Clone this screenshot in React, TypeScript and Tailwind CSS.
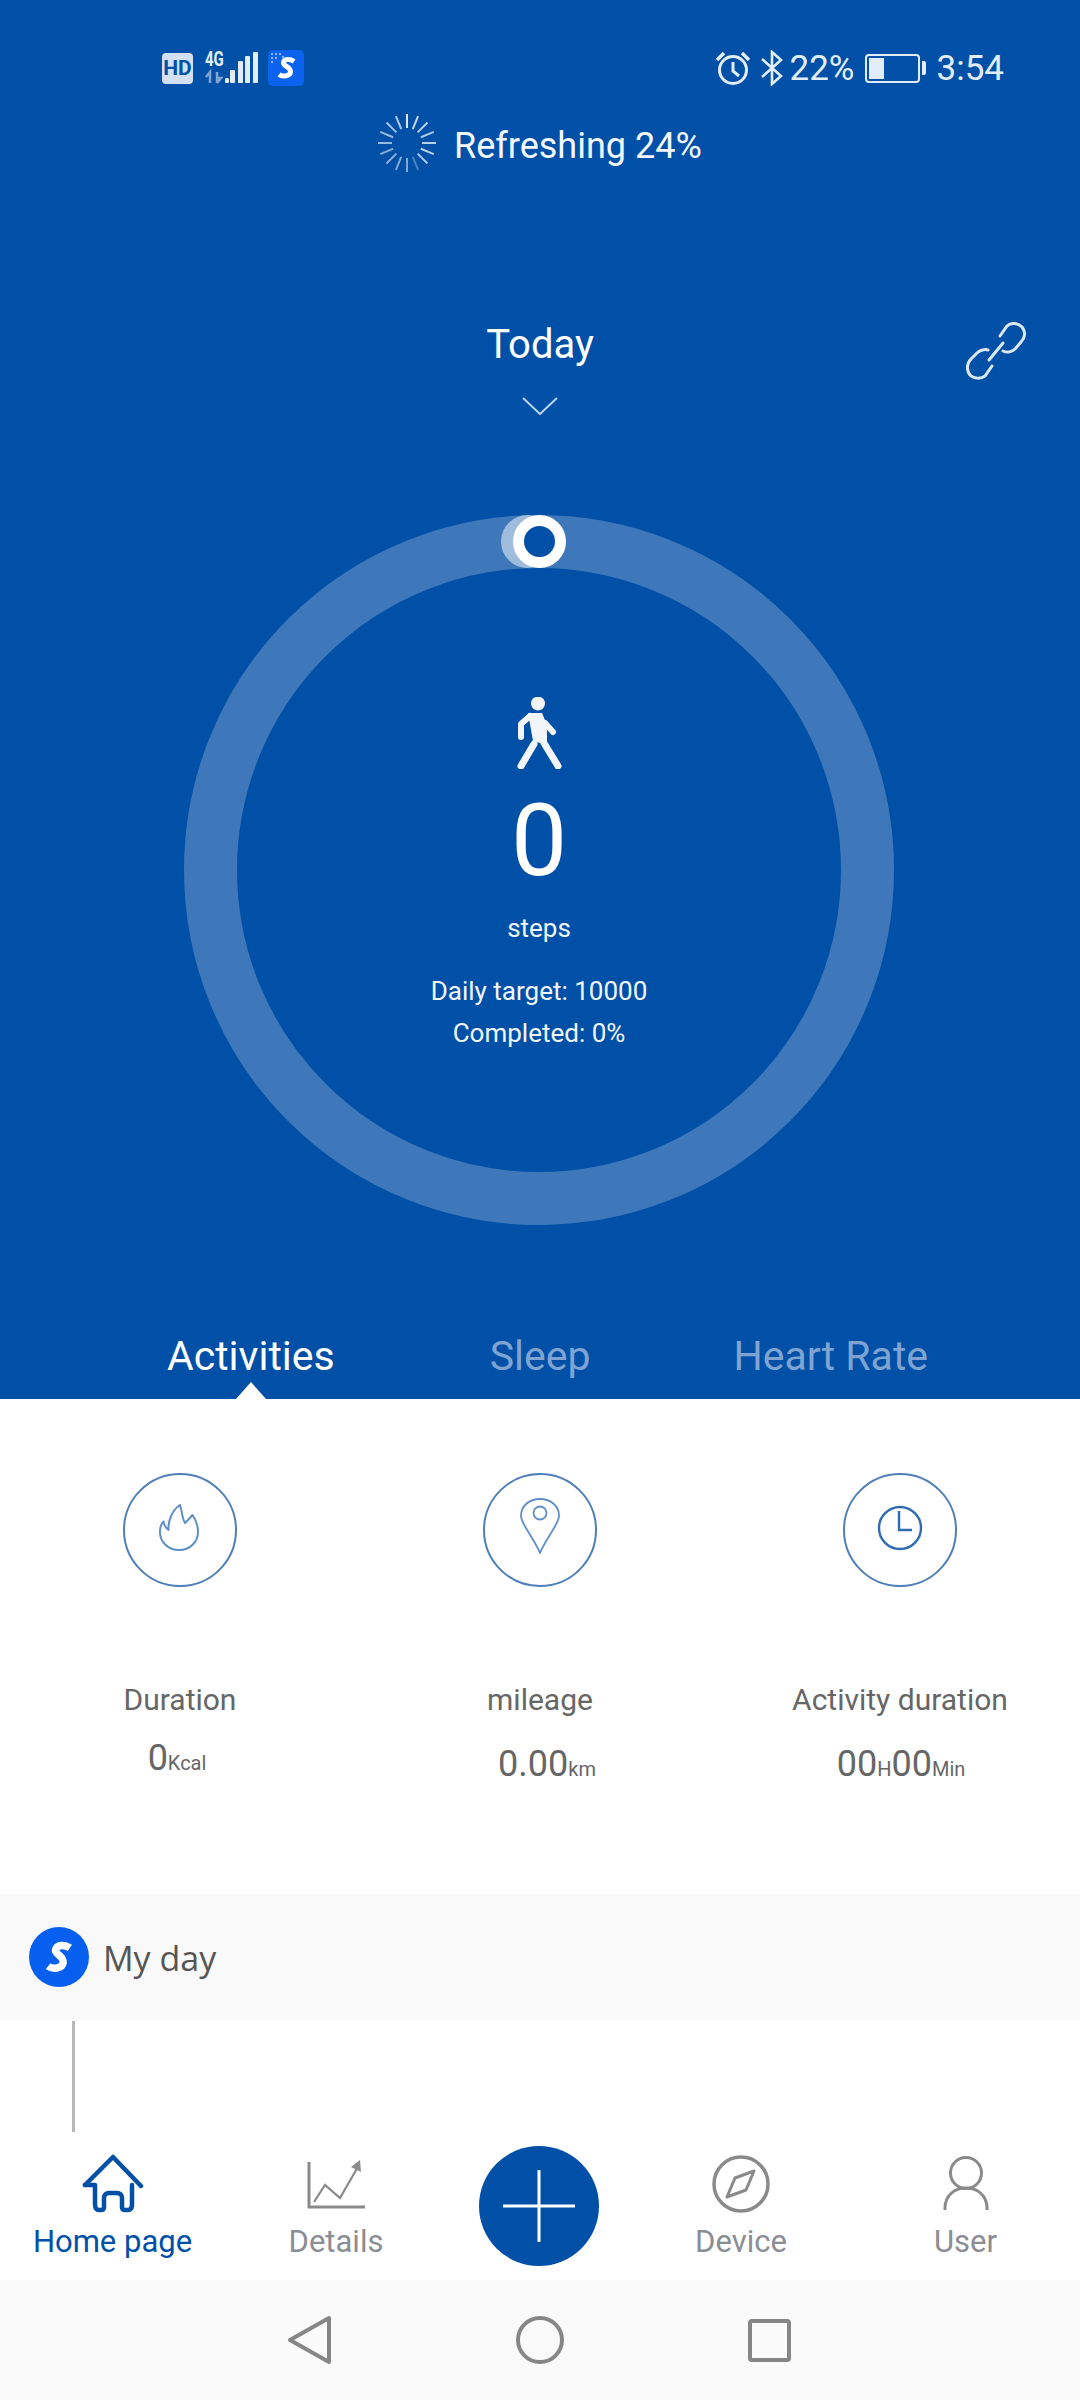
const spinnerOpacity = [1, 0.9, 0.85, 0.8, 0.85, 0.85, 0.8, 0.35, 0.6, 0.6, 0.65, 0.6, 0.7, 0.7, 0.75, 0.8];

function Spinner() {
  return (
    <svg width="60" height="60" viewBox="0 0 60 60" className="shrink-0">
      {spinnerOpacity.map((o, i) => (
        <line
          key={i}
          x1="30"
          y1="1"
          x2="30"
          y2="15"
          stroke="#dbe7f5"
          strokeWidth="2"
          opacity={o}
          transform={`rotate(${i * 22.5} 30 30)`}
        />
      ))}
    </svg>
  );
}

function SLogo({ size, rounded }: { size: number; rounded?: boolean }) {
  return (
    <svg width={size} height={size} viewBox="0 0 36 36" className="shrink-0">
      {rounded ? (
        <>
          <rect width="36" height="36" rx="5" fill="#0a62ee" />
          <g fill="#8fb8f7">
            <rect x="3" y="3" width="2" height="2" />
            <rect x="7" y="3" width="2" height="2" />
            <rect x="11" y="3" width="2" height="2" />
            <rect x="3" y="7" width="2" height="2" />
            <rect x="7" y="7" width="2" height="2" />
            <rect x="3" y="11" width="2" height="2" />
            <rect x="14" y="6" width="2" height="2" />
          </g>
          <path d="M26 11.5C22 8.5 16 9 15.5 12.5C15 16.5 23 16.5 22.5 22C22 26.5 14 27 11 24.5" fill="none" stroke="#fff" strokeWidth="5" />
        </>
      ) : (
        <>
          <circle cx="18" cy="18" r="18" fill="#075ff0" />
          <path d="M24.5 12.5C21.5 10.5 17 10.5 16 13.5C15 16.5 21 17 20.5 21.5C20 25 14 25.5 11.5 23.5" fill="none" stroke="#fff" strokeWidth="4.5" />
        </>
      )}
    </svg>
  );
}

function StatusBar() {
  return (
    <div className="flex h-[40px] items-center justify-between pl-[162px] pr-[76px] text-[35px] leading-[40px] text-[#e3edf9]">
      <div className="flex items-center">
        <div className="flex h-[31px] w-[31px] items-center justify-center rounded-[4px] bg-[#d3e0f1] text-[21px] font-bold leading-none text-[#0050a8]">
          HD
        </div>
        <div className="relative ml-[12px] h-[34px] w-[53px]">
          <span className="absolute left-0 top-0 origin-left scale-x-75 text-[20px] font-bold leading-[17px] text-[#e3edf9]">4G</span>
          <svg width="53" height="34" viewBox="0 0 53 34" className="absolute left-0 top-0">
            <path d="M5 21V32M1 26L5 21L5 29M12 32V21M12 32L16 27L12 27" stroke="#7fa4d2" strokeWidth="2.5" fill="none" />
            <rect x="20" y="27" width="4" height="5" rx="1.5" fill="#e3edf9" />
            <rect x="25" y="19" width="5" height="13" rx="1" fill="#e3edf9" />
            <rect x="33" y="10" width="5" height="22" rx="1" fill="#e3edf9" />
            <rect x="40" y="5" width="5" height="27" rx="1" fill="#e3edf9" />
            <rect x="48" y="1" width="5" height="31" rx="1" fill="#e3edf9" />
          </svg>
        </div>
        <div className="ml-[10px]">
          <SLogo size={36} rounded />
        </div>
      </div>
      <div className="flex items-center">
        <svg width="36" height="36" viewBox="0 0 36 36" fill="none" stroke="#e3edf9" strokeWidth="3">
          <circle cx="18" cy="20" r="13.5" />
          <path d="M18 12V21L24 26" />
          <path d="M2 10L9 3M34 10L27 3" strokeWidth="3.5" />
        </svg>
        <svg width="24" height="36" viewBox="0 0 24 36" fill="none" stroke="#e3edf9" strokeWidth="2.6" className="ml-[9px]">
          <path d="M2 9L21 26L12 34V2L21 10L2 27" />
        </svg>
        <span className="ml-[6px] mt-[2px]">22%</span>
        <div className="ml-[10px] flex items-center">
          <div className="h-[29px] w-[55px] rounded-[4px] border-[2px] border-[#e3edf9] p-[2px]">
            <div className="h-full w-[15px] bg-[#e3edf9]" />
          </div>
          <div className="ml-[2px] h-[14px] w-[4px] rounded-r-[2px] bg-[#e3edf9]" />
        </div>
        <span className="ml-[11px] mt-[2px]">3:54</span>
      </div>
    </div>
  );
}

function Walker() {
  return (
    <svg width="45" height="72" viewBox="0 0 45 72" fill="none" stroke="#f2f5f9" strokeWidth="7" strokeLinecap="round" strokeLinejoin="round">
      <circle cx="21" cy="6.5" r="7" fill="#f2f5f9" stroke="none" />
      <path d="M11 16H25L30 28V48L16 44Z" fill="#f2f5f9" stroke="none" />
      <path d="M13 19L4 27V40" strokeWidth="6" />
      <path d="M28 26L36 35" strokeWidth="6" />
      <path d="M17 47L4 69" />
      <path d="M27 46L41 69" />
    </svg>
  );
}

function Hero() {
  return (
    <section className="relative flex h-[1399px] flex-col bg-[#0050a8] pt-[48px] text-white">
      <StatusBar />

      <div className="mt-[25px] flex h-[60px] items-center pl-[377px]">
        <Spinner />
        <span className="ml-[17px] mt-[6px] text-[36px] leading-[40px] text-[#f4f8fc]">Refreshing 24%</span>
      </div>

      <div className="mt-[147px] text-center text-[40px] leading-[50px]">Today</div>
      <svg width="36" height="18" viewBox="0 0 36 18" fill="none" stroke="#bcd2ea" strokeWidth="2" className="mx-auto mt-[27px]">
        <path d="M1 1L18 17L35 1" />
      </svg>

      {/* link button */}
      <svg width="60" height="58" viewBox="0 0 60 58" fill="none" stroke="#dde8f5" strokeWidth="3" strokeLinecap="round" className="absolute left-[966px] top-[322px]">
        <path d="M34 14L41 4C45 0 52 1 56 5C60 10 59 16 55 20L49 27C46 30 41 31 37 29" />
        <path d="M26 44L19 54C15 57 8 57 4 53C0 48 1 41 5 37L11 31C14 28 19 27 22 28" />
        <path d="M23 38L37 21" />
      </svg>

      {/* step ring */}
      <div className="relative ml-[184px] mt-[100px] flex h-[710px] w-[710px] shrink-0 flex-col items-center rounded-full border-[53px] border-[#3f78ba] pt-[129px]">
        <div className="absolute left-[264px] top-[-53px] h-[53px] w-[53px] rounded-full bg-[#a0bcdd]" />
        <div className="absolute left-[276px] top-[-53px] h-[53px] w-[53px] rounded-full border-[11px] border-white bg-[#0050a8]" />
        <Walker />
        <div className="mt-[22px] text-[100px] leading-[100px]">0</div>
        <div className="mt-[21px] text-[26px] leading-[32px] text-[#f2f6fb]">steps</div>
        <div className="mt-[26px] text-center text-[26px] leading-[42px] text-[#f2f6fb]">
          <div>Daily target: 10000</div>
          <div>Completed: 0%</div>
        </div>
      </div>

      <div className="mt-[107px] flex pl-[167px] text-[41px] leading-[48px] text-[#7fa4d2]">
        <div className="relative text-white">
          Activities
          <div className="absolute left-1/2 top-[50px] h-0 w-0 -translate-x-1/2 border-x-[15px] border-b-[17px] border-x-transparent border-b-white" />
        </div>
        <div className="ml-[155px]">Sleep</div>
        <div className="ml-[143px]">Heart Rate</div>
      </div>
    </section>
  );
}

function StatCircle({ children }: { children: React.ReactNode }) {
  return (
    <div className="flex h-[114px] w-[114px] items-center justify-center rounded-full border-2 border-[#4f80ba]">
      {children}
    </div>
  );
}

function Stats() {
  return (
    <section className="grid h-[495px] grid-cols-3 bg-white pt-[74px] text-[#666666]">
      <div className="flex flex-col items-center">
        <StatCircle>
          <svg width="40" height="48" viewBox="0 0 40 48" fill="none" stroke="#5f8fc6" strokeWidth="2" strokeLinejoin="round" className="mb-[5px] mr-[3px]">
            <path d="M20 46C9 46 1 38 1 28C1 24 2 20 4.5 17.5C5 21 7 24 9.5 26C9 17 13 6 21 1C23 7 23 14 26 19C28 17 31 14 33.5 11C37 16 39 22 39 28C39 38 31 46 20 46Z" />
          </svg>
        </StatCircle>
        <div className="mt-[95px] text-[30px] leading-[36px]">Duration</div>
        <div className="-ml-[6px] mt-[18px] text-[36px] leading-[44px]">
          0<span className="text-[20px]">Kcal</span>
        </div>
      </div>

      <div className="flex flex-col items-center">
        <StatCircle>
          <svg width="40" height="56" viewBox="0 0 40 56" fill="none" stroke="#5f8fc6" strokeWidth="1.8" className="mb-[8px]">
            <path d="M20 55C14 40 1 26 1 18C1 8 9 1 20 1C31 1 39 8 39 18C39 26 26 40 20 55Z" />
            <circle cx="20" cy="15" r="6.5" />
          </svg>
        </StatCircle>
        <div className="mt-[95px] text-[30px] leading-[36px]">mileage</div>
        <div className="ml-[14px] mt-[24px] text-[36px] leading-[44px]">
          0.00<span className="text-[20px]">km</span>
        </div>
      </div>

      <div className="flex flex-col items-center">
        <StatCircle>
          <svg width="46" height="46" viewBox="0 0 46 46" fill="none" stroke="#2f6bb0" strokeWidth="2.4" className="mb-[4px]">
            <circle cx="23" cy="23" r="21" />
            <path d="M22 6V25H35" />
          </svg>
        </StatCircle>
        <div className="mt-[95px] text-[30px] leading-[36px]">Activity duration</div>
        <div className="ml-[2px] mt-[24px] text-[36px] leading-[44px]">
          00<span className="text-[20px]">H</span>00<span className="text-[20px]">Min</span>
        </div>
      </div>
    </section>
  );
}

function MyDay() {
  return (
    <>
      <section className="flex h-[126px] items-center bg-[#f9f9f9] pl-[29px]">
        <SLogo size={60} />
        <span className="ml-[14px] mt-[2px] font-['Open_Sans',sans-serif] text-[34px] leading-[46px] text-[#555555]">My day</span>
      </section>
      <div className="h-[112px] bg-white pt-[1px]">
        <div className="ml-[72px] h-[111px] w-[3px] bg-[#b8b8b8]" />
      </div>
    </>
  );
}

function NavItem({ label, width, active, children }: { label: string; width: string; active?: boolean; children: React.ReactNode }) {
  return (
    <div className={`flex flex-col items-center pt-[22px] ${width} ${active ? 'text-[#0050a8]' : 'text-[#8a8d93]'}`}>
      {children}
      <span className="mt-[10px] text-[31px] leading-[36px]">{label}</span>
    </div>
  );
}

function BottomNav() {
  return (
    <nav className="flex h-[148px] bg-white">
      <NavItem label="Home page" width="w-[225px]" active>
        <svg width="66" height="60" viewBox="0 0 66 60" fill="none" stroke="#0050a8" strokeWidth="4.5" strokeLinecap="round" strokeLinejoin="round">
          <path d="M5 31L33 3L61 32" />
          <path d="M5 31H15V50C15 54 16 56 19 56H21C23 56 24 55 24 53V44C24 41 26 39 29 39H37C40 39 42 41 42 44V53C42 55 43 56 45 56H48C51 56 52 54 52 51V31" />
        </svg>
      </NavItem>
      <NavItem label="Details" width="w-[222px]">
        <svg width="66" height="60" viewBox="0 0 66 60" fill="none" stroke="#8a8a8a">
          <path d="M6 8V53H62" strokeWidth="3" />
          <path d="M11 48L22 31L37 44L56 11" strokeWidth="2.2" />
          <path d="M57 6L58 18L48 13Z" fill="#8a8a8a" stroke="none" />
        </svg>
      </NavItem>
      <div className="flex w-[184px] justify-center pt-[14px]">
        <div className="flex h-[120px] w-[120px] items-center justify-center rounded-full bg-[#0050a8]">
          <svg width="72" height="72" viewBox="0 0 72 72" stroke="#ffffff" strokeWidth="3">
            <path d="M0 36H72M36 0V72" />
          </svg>
        </div>
      </div>
      <NavItem label="Device" width="w-[220px]">
        <svg width="66" height="60" viewBox="0 0 66 60" fill="none" stroke="#8a8a8a" strokeWidth="3.5" strokeLinejoin="round">
          <circle cx="33" cy="30" r="27" />
          <path d="M46 17L38 36L19 43L27 24Z" strokeWidth="3" />
        </svg>
      </NavItem>
      <NavItem label="User" width="w-[229px]">
        <svg width="66" height="60" viewBox="0 0 66 60" fill="none" stroke="#8a8a8a" strokeWidth="3">
          <circle cx="33" cy="19" r="15.5" />
          <path d="M12 56V54C12 42 21 34 33 34C45 34 54 42 54 54V56" />
        </svg>
      </NavItem>
    </nav>
  );
}

function SystemBar() {
  return (
    <div className="flex h-[120px] items-center justify-center gap-[170px] bg-[#fafafa]">
      <svg width="60" height="60" viewBox="0 0 60 60" fill="none" stroke="#868686" strokeWidth="4" strokeLinejoin="round">
        <path d="M10 30L49 8V52Z" />
      </svg>
      <svg width="60" height="60" viewBox="0 0 60 60" fill="none" stroke="#868686" strokeWidth="4">
        <circle cx="30" cy="30" r="22" />
      </svg>
      <svg width="60" height="60" viewBox="0 0 60 60" fill="none" stroke="#868686" strokeWidth="4" strokeLinejoin="round">
        <rect x="10" y="11" width="39" height="39" rx="2" />
      </svg>
    </div>
  );
}

export default function App() {
  return (
    <div className="h-[2400px] w-[1080px] overflow-hidden bg-white font-['Roboto',sans-serif]">
      <Hero />
      <Stats />
      <MyDay />
      <BottomNav />
      <SystemBar />
    </div>
  );
}
